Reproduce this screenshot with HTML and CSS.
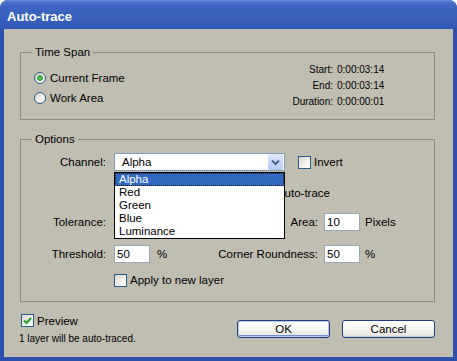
FILE: index.html
```html
<!DOCTYPE html>
<html>
<head>
<meta charset="utf-8">
<link rel="stylesheet" href="styles.css">
</head>
<body>
<div class="window">
  <div class="titlebar"><span class="title">Auto-trace</span></div>
  <div class="client">
    <fieldset class="group group-time">
      <legend>Time Span</legend>
      <div class="time-body">
        <div class="radios">
          <div class="radio-row"><span class="radio checked"></span>Current Frame</div>
          <div class="radio-row"><span class="radio"></span>Work Area</div>
        </div>
        <div class="times">
          <div class="trow"><span class="tlabel">Start:</span><span class="tval">0:00:03:14</span></div>
          <div class="trow"><span class="tlabel">End:</span><span class="tval">0:00:03:14</span></div>
          <div class="trow"><span class="tlabel">Duration:</span><span class="tval">0:00:00:01</span></div>
        </div>
      </div>
    </fieldset>

    <fieldset class="group group-opts">
      <legend>Options</legend>
      <div class="row row-channel">
        <span class="lbl">Channel:</span>
        <div class="select-wrap">
          <div class="select">
            <span class="select-text">Alpha</span>
            <span class="arrow"><svg width="15" height="16" viewBox="0 0 15 16"><path d="M4 6.5 L7.5 10 L11 6.5" fill="none" stroke="#4d6185" stroke-width="2"/></svg></span>
          </div>
          <ul class="listbox">
            <li class="sel">Alpha</li>
            <li>Red</li>
            <li>Green</li>
            <li>Blue</li>
            <li>Luminance</li>
          </ul>
        </div>
        <div class="check-row invert"><span class="checkbox"></span>Invert</div>
      </div>

      <div class="row row-blur">
        <span class="lbl"></span>
        <div class="blur-inner">
          <div class="check-row covered"><span class="checkbox"></span>Blur <span class="num small">2</span></div>
          <span><span class="covered">pixels before a</span>uto-trace</span>
        </div>
      </div>

      <div class="row row-tol">
        <span class="lbl">Tolerance:</span>
        <span class="num covered">1</span>
        <span class="unit covered">Pixels</span>
        <span class="rlbl"><span class="covered">Minimum </span>Area:</span>
        <span class="num rnum">10</span>
        <span class="runit">Pixels</span>
      </div>

      <div class="row row-thr">
        <span class="lbl">Threshold:</span>
        <span class="num">50</span>
        <span class="unit">%</span>
        <span class="rlbl">Corner Roundness:</span>
        <span class="num rnum">50</span>
        <span class="runit">%</span>
      </div>

      <div class="row row-apply">
        <span class="lbl"></span>
        <div class="check-row"><span class="checkbox"></span>Apply to new layer</div>
      </div>
    </fieldset>

    <div class="footer">
      <div class="footer-left">
        <div class="check-row preview"><span class="checkbox checked"><svg width="11" height="11" viewBox="0 0 11 11"><path d="M2 5.5 L4.5 8 L9 3" fill="none" stroke="#21a121" stroke-width="2"/></svg></span>Preview</div>
        <div class="note">1 layer will be auto-traced.</div>
      </div>
      <div class="buttons">
        <button class="btn default">OK</button>
        <button class="btn">Cancel</button>
      </div>
    </div>
  </div>
</div>
</body>
</html>
```

FILE: styles.css
```css
html, body {
  margin: 0;
  padding: 0;
  background: #ffffff;
}

body {
  font-family: "Liberation Sans", Arial, sans-serif;
  font-size: 11.5px;
  color: #000;
}

.window {
  width: 457px;
  height: 361px;
  background: #2c50ac;
  border-radius: 8px 8px 0 0;
  display: flex;
  flex-direction: column;
  overflow: hidden;
}

.titlebar {
  height: 29px;
  flex-shrink: 0;
  box-sizing: border-box;
  padding: 9px 0 0 7px;
  background: linear-gradient(180deg, #6a90e0 0px, #4a72cc 2px, #3d65c2 6px, #3860bd 60%, #3158b4 100%);
  border-radius: 8px 8px 0 0;
}

.title {
  display: block;
  color: #fff;
  font: bold 13px/15px "Liberation Sans", Arial, sans-serif;
}

.client {
  flex: 1;
  margin: 0 4px 4px 4px;
  background: #c0bdb1;
  box-sizing: border-box;
  padding: 16px 18px 0 16px;
}

.group {
  margin: 0;
  padding: 0;
  border: 1px solid #8f8c82;
  min-width: 0;
}

.group legend {
  margin-left: 11px;
  padding: 0 3px;
  line-height: 14px;
  font-size: 11.5px;
}

.time-body {
  display: flex;
  height: 60px;
}

.radios {
  padding: 9px 0 0 13px;
}

.radio-row {
  display: flex;
  align-items: center;
  height: 20px;
}

.radio {
  width: 12px;
  height: 12px;
  box-sizing: border-box;
  border: 1px solid #2a5c8a;
  border-radius: 50%;
  margin-right: 4px;
  background: linear-gradient(135deg, #d8d6cc 0%, #f4f3ee 60%, #ffffff 100%);
}

.radio.checked {
  background: radial-gradient(circle at 50% 50%, #5fd35f 0, #28a428 2.5px, transparent 3.2px),
              linear-gradient(135deg, #d8d6cc 0%, #f4f3ee 60%, #ffffff 100%);
}

.times {
  margin-left: auto;
  padding: 3px 45px 0 0;
  font-size: 10px;
  line-height: 16px;
}

.trow {
  display: flex;
  justify-content: flex-end;
}

.tval {
  width: 52px;
  margin-left: 4px;
}

.group-opts {
  margin-top: 12px;
  padding-bottom: 14px;
}

.row {
  display: flex;
  align-items: center;
  height: 18px;
}

.row-channel { margin-top: 7px; }
.row-blur { margin-top: 13px; }
.row-tol { margin-top: 11px; }
.row-thr { margin-top: 14px; }
.row-apply { margin-top: 10px; height: 14px; }

.covered {
  visibility: hidden;
}

.lbl {
  width: 85px;
  margin-right: 8px;
  text-align: right;
  flex-shrink: 0;
}

.select-wrap {
  position: relative;
  width: 171px;
  height: 18px;
  flex-shrink: 0;
}

.select {
  height: 18px;
  box-sizing: border-box;
  border: 1px solid #7f9db9;
  background: #fff;
  display: flex;
  align-items: center;
  padding-left: 7px;
}

.arrow {
  margin-left: auto;
  margin-right: 1px;
  width: 15px;
  height: 16px;
  border-radius: 2px;
  background: linear-gradient(180deg, #dfe8fb 0%, #c6d6f7 60%, #b4c8f2 100%);
  display: flex;
}

.listbox {
  position: absolute;
  left: 0;
  top: 19px;
  width: 171px;
  box-sizing: border-box;
  margin: 0;
  padding: 0;
  list-style: none;
  border: 1px solid #000;
  background: #fff;
  z-index: 2;
}

.listbox li {
  height: 13px;
  line-height: 13px;
  padding-left: 4px;
}

.listbox li.sel {
  background: #3169c0;
  color: #fff;
  outline: 1px dotted #1a1a1a;
  outline-offset: -1px;
}

.check-row {
  display: flex;
  align-items: center;
}

.checkbox {
  width: 13px;
  height: 13px;
  box-sizing: border-box;
  border: 1px solid #2a5c8a;
  margin-right: 3px;
  background: linear-gradient(135deg, #d9d7ce 0%, #f3f2ec 60%, #ffffff 100%);
  display: flex;
  align-items: center;
  justify-content: center;
  flex-shrink: 0;
}

.invert {
  margin-left: 13px;
}

.blur-inner {
  width: 216px;
  display: flex;
  justify-content: space-between;
  align-items: center;
}

.num {
  width: 36px;
  height: 18px;
  box-sizing: border-box;
  border: 1px solid #98a6b6;
  background: #fff;
  padding-left: 2px;
  line-height: 16px;
  flex-shrink: 0;
}

.num.small {
  width: 24px;
  margin-left: 4px;
}

.unit {
  width: 50px;
  box-sizing: border-box;
  padding-left: 7px;
  flex-shrink: 0;
}

.rlbl {
  width: 118px;
  text-align: right;
  flex-shrink: 0;
}

.rnum {
  margin-left: 6px;
}

.runit {
  margin-left: 5px;
}

.footer {
  display: flex;
  margin-top: 12px;
}

.footer-left {
  padding-left: 1px;
}

.preview {
  height: 13px;
}

.note {
  margin-top: 6px;
  margin-left: -2px;
  font-size: 10px;
  line-height: 12px;
}

.buttons {
  margin-left: auto;
  margin-top: 6px;
  display: flex;
  gap: 12px;
}

.btn {
  width: 93px;
  height: 18px;
  box-sizing: border-box;
  padding: 0;
  border: 1px solid #1e3f78;
  border-radius: 3px;
  background: linear-gradient(180deg, #ffffff 0%, #f6f6f2 50%, #e9e8e2 85%, #d9d6cc 100%);
  font-family: "Liberation Sans", Arial, sans-serif;
  font-size: 11.5px;
  color: #000;
  box-shadow: inset 0 -1px 0 #c9cfdf;
}

.btn.default {
  box-shadow: inset 0 0 0 1px #b5c9f1, inset 0 -2px 0 #6f8fd6;
}
```
